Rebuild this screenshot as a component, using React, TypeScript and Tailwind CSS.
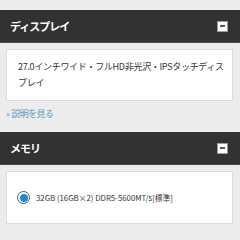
import React from "react";

function MinusBox() {
  return (
    <div className="w-[11px] h-[11px] bg-[#9a9a9a] p-[1px]">
      <div className="w-full h-full bg-white flex items-center justify-center">
        <div className="w-[5px] h-[2px] bg-[#555]" />
      </div>
    </div>
  );
}

function Header({ title }: { title: string }) {
  return (
    <div className="h-[33px] bg-[#323232] border-b border-[#4a4a4a] flex items-center justify-between pl-[10px] pr-[12px]">
      <span className="text-white font-bold text-[11px] tracking-[-1px] leading-none">{title}</span>
      <MinusBox />
    </div>
  );
}

export default function App() {
  return (
    <div
      className="w-[240px] h-[240px] bg-[#ececec] pt-[10px] overflow-hidden"
      style={{ fontFamily: '"Noto Sans CJK JP", "Noto Sans", sans-serif' }}
    >
      <Header title="ディスプレイ" />
      <div className="mt-[6px] ml-[6px] w-[227px] h-[52px] bg-white border border-[#dcdcdc] pl-[11px] pr-[2px] pt-[9px]">
        <p className="text-[9px] leading-[16px] text-[#333] tracking-[-0.3px] whitespace-nowrap">
          27.0インチワイド・フルHD非光沢・IPSタッチディス
          <br />
          プレイ
        </p>
      </div>
      <div className="mt-[5px] ml-[6px] h-[16px] flex items-center text-[#5b97bd] text-[9px] tracking-[-0.6px]">
        <span className="text-[8px] mr-[2px]">»</span>
        <span>説明を見る</span>
      </div>
      <div className="mt-[10px]">
        <Header title="メモリ" />
      </div>
      <div className="mt-[6px] ml-[6px] w-[227px] h-[53px] bg-white border border-[#dcdcdc] flex items-center pl-[10px]">
        <div className="w-[13px] h-[13px] rounded-full border border-[#555] flex items-center justify-center">
          <div className="w-[8px] h-[8px] rounded-full bg-[#1f8ad2]" />
        </div>
        <span className="ml-[6px] text-[7.8px] text-[#333]">
          32GB (16GB×2) DDR5-5600MT/s[標準]
        </span>
      </div>
    </div>
  );
}
